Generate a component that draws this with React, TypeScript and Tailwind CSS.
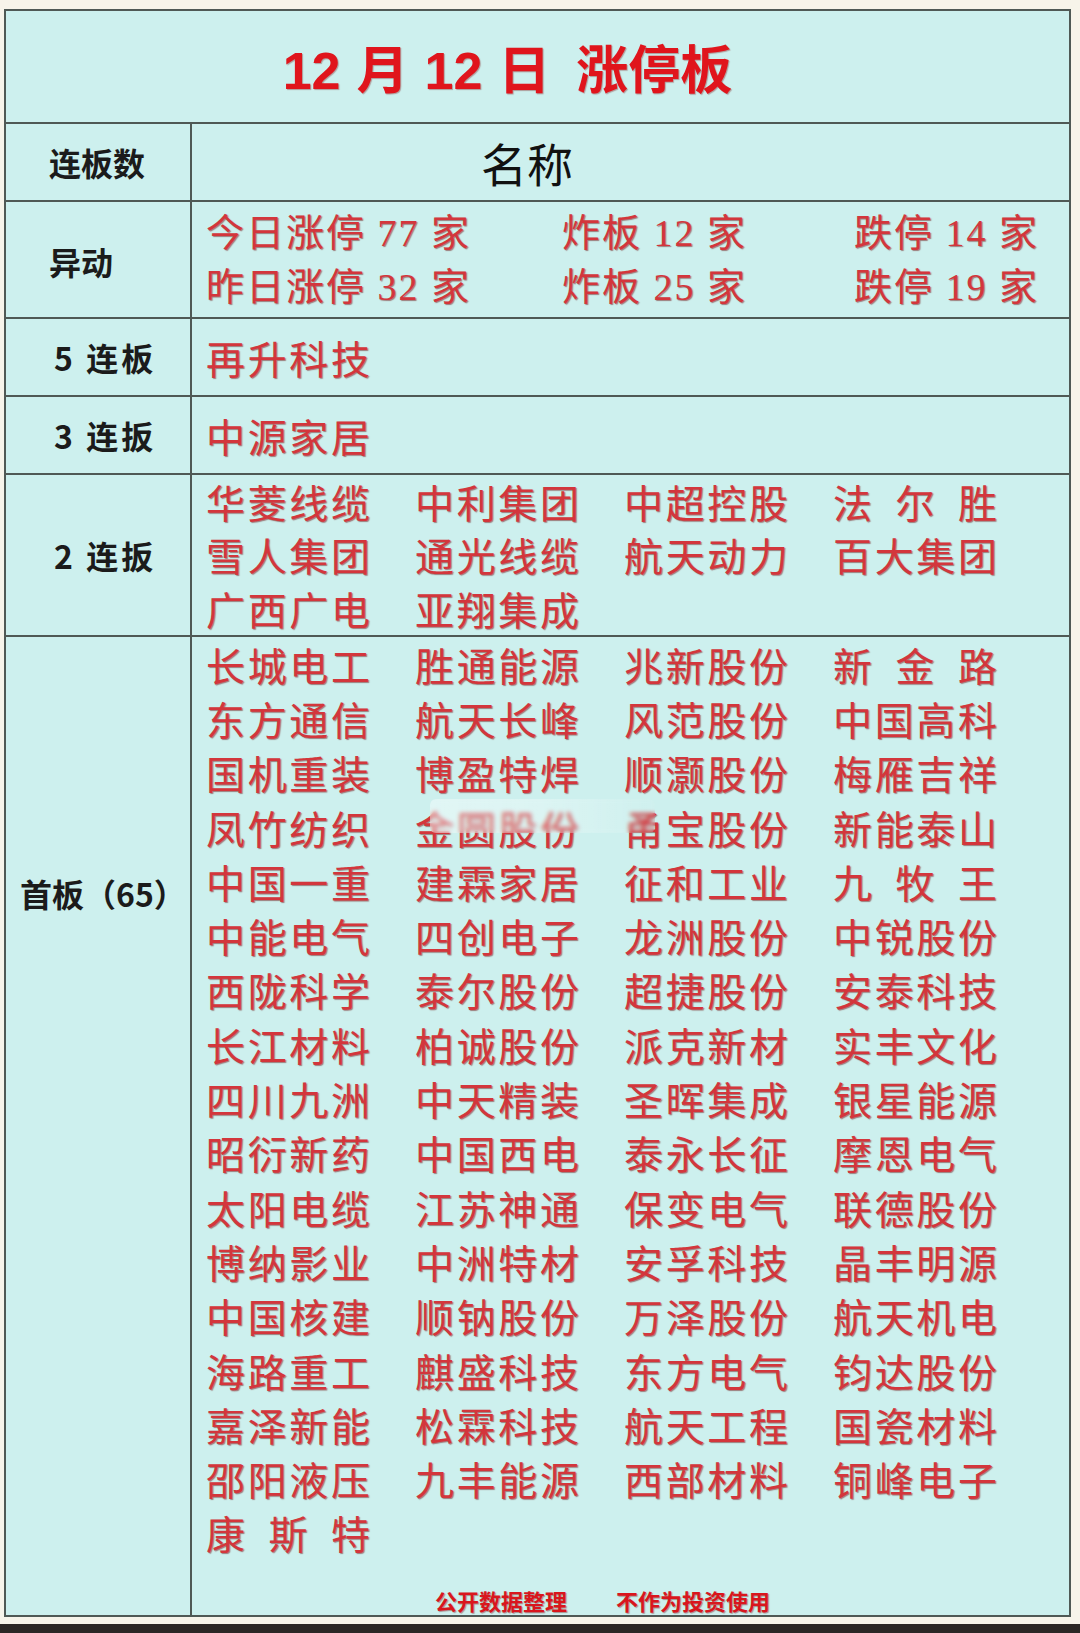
import React from "react";

const erLian: string[][] = [
  ["华菱线缆", "中利集团", "中超控股", "法尔胜"],
  ["雪人集团", "通光线缆", "航天动力", "百大集团"],
  ["广西广电", "亚翔集成"],
];

const shouBan: string[][] = [
  ["长城电工", "胜通能源", "兆新股份", "新金路"],
  ["东方通信", "航天长峰", "风范股份", "中国高科"],
  ["国机重装", "博盈特焊", "顺灏股份", "梅雁吉祥"],
  ["凤竹纺织", "金圆股份", "甬宝股份", "新能泰山"],
  ["中国一重", "建霖家居", "征和工业", "九牧王"],
  ["中能电气", "四创电子", "龙洲股份", "中锐股份"],
  ["西陇科学", "泰尔股份", "超捷股份", "安泰科技"],
  ["长江材料", "柏诚股份", "派克新材", "实丰文化"],
  ["四川九洲", "中天精装", "圣晖集成", "银星能源"],
  ["昭衍新药", "中国西电", "泰永长征", "摩恩电气"],
  ["太阳电缆", "江苏神通", "保变电气", "联德股份"],
  ["博纳影业", "中洲特材", "安孚科技", "晶丰明源"],
  ["中国核建", "顺钠股份", "万泽股份", "航天机电"],
  ["海路重工", "麒盛科技", "东方电气", "钧达股份"],
  ["嘉泽新能", "松霖科技", "航天工程", "国瓷材料"],
  ["邵阳液压", "九丰能源", "西部材料", "铜峰电子"],
  ["康斯特"],
];

function Name({ text }: { text: string }) {
  return (
    <div className="flex w-[164px] justify-between">
      {text.split("").map((c, i) => (
        <span key={i}>{c}</span>
      ))}
    </div>
  );
}

function NameRow({ names, h }: { names: string[]; h: string }) {
  return (
    <div className={`grid grid-cols-[164px_164px_164px_164px] gap-x-[45px] items-center ${h}`}>
      {names.map((n) => (
        <Name key={n} text={n} />
      ))}
    </div>
  );
}

const red =
  "text-[#d3363c] [text-shadow:1px_1px_1px_rgba(110,10,10,0.5)] text-[39px] leading-none font-normal";
const label = "text-[#1b1b1b] text-[32px] font-bold leading-none";

export default function App() {
  return (
    <div className="relative w-[1080px] h-[1633px] bg-[#f7f4ea] flex flex-col font-['Noto_Sans_CJK_SC',sans-serif]">
      <div className="ml-[4px] mt-[9px] w-[1067px] h-[1608px] border-2 border-[#4f5955] bg-[#cdf0ee] flex flex-col">
        {/* Title */}
        <div className="h-[113px] border-b-2 border-[#4f5955] flex items-center justify-center pr-[60px] pt-[8px]">
          <div className="text-[#e0151c] text-[52px] font-bold leading-none font-['Liberation_Sans','Noto_Sans_CJK_SC',sans-serif] [text-shadow:1px_1px_1px_rgba(120,0,0,0.35)] flex items-center">
            <span>12</span>
            <span className="ml-[16px]">月</span>
            <span className="ml-[16px]">12</span>
            <span className="ml-[16px]">日</span>
            <span className="ml-[26px]">涨停板</span>
          </div>
        </div>

        {/* Header */}
        <div className="h-[78px] border-b-2 border-[#4f5955] flex">
          <div className="w-[186px] border-r-2 border-[#4f5955] flex items-center pl-[43px]">
            <span className={label}>连板数</span>
          </div>
          <div className="flex-1 flex items-center pl-[289px]">
            <span className="text-[#111] text-[46px] leading-none">名称</span>
          </div>
        </div>

        {/* 异动 */}
        <div className="h-[117px] border-b-2 border-[#4f5955] flex">
          <div className="w-[186px] border-r-2 border-[#4f5955] flex items-center pl-[43px] pt-[2px]">
            <span className={label}>异动</span>
          </div>
          <div className="flex-1 flex flex-col justify-center pl-[14px] text-[#d3363c] [text-shadow:1px_1px_1px_rgba(110,10,10,0.5)] text-[38px] leading-none font-['Liberation_Serif','Noto_Sans_CJK_SC',serif] tracking-[2px]">
            <div className="grid grid-cols-[356px_292px_auto] h-[54px] items-center">
              <span>今日涨停 77 家</span>
              <span>炸板 12 家</span>
              <span>跌停 14 家</span>
            </div>
            <div className="grid grid-cols-[356px_292px_auto] h-[54px] items-center">
              <span>昨日涨停 32 家</span>
              <span>炸板 25 家</span>
              <span>跌停 19 家</span>
            </div>
          </div>
        </div>

        {/* 5连板 */}
        <div className="h-[78px] border-b-2 border-[#4f5955] flex">
          <div className="w-[186px] border-r-2 border-[#4f5955] flex items-center pl-[48px]">
            <span className={`${label} tracking-[3px]`}>5 连板</span>
          </div>
          <div className={`flex-1 flex items-center pl-[14px] ${red}`}>
            <Name text="再升科技" />
          </div>
        </div>

        {/* 3连扳 */}
        <div className="h-[78px] border-b-2 border-[#4f5955] flex">
          <div className="w-[186px] border-r-2 border-[#4f5955] flex items-center pl-[48px]">
            <span className={`${label} tracking-[3px]`}>3 连扳</span>
          </div>
          <div className={`flex-1 flex items-center pl-[14px] ${red}`}>
            <Name text="中源家居" />
          </div>
        </div>

        {/* 2连扳 */}
        <div className="h-[162px] border-b-2 border-[#4f5955] flex">
          <div className="w-[186px] border-r-2 border-[#4f5955] flex items-center pl-[48px]">
            <span className={`${label} tracking-[3px]`}>2 连扳</span>
          </div>
          <div className={`flex-1 flex flex-col justify-center pl-[14px] ${red}`}>
            {erLian.map((r, i) => (
              <NameRow key={i} names={r} h="h-[53.5px]" />
            ))}
          </div>
        </div>

        {/* 首板 */}
        <div className="flex-1 flex">
          <div className="w-[186px] border-r-2 border-[#4f5955] pl-[14px] pt-[240px]">
            <span className={label}>首板（65）</span>
          </div>
          <div className="flex-1 flex flex-col pl-[14px]">
            <div className={`flex flex-col ${red}`}>
              {shouBan.map((r, i) => (
                <NameRow key={i} names={r} h="h-[54.3px]" />
              ))}
            </div>
            <div className="mt-auto mb-[4px] flex items-center pl-[229px] text-[#d9161d] text-[22px] font-bold leading-none [text-shadow:1px_1px_1px_rgba(110,0,0,0.4)]">
              <span>公开数据整理</span>
              <span className="ml-[49px]">不作为投资使用</span>
            </div>
          </div>
        </div>
      </div>
      <div className="mt-auto h-[9px] bg-[#2b2725]" />

      {/* blurred watermark streak */}
      <div className="absolute left-[430px] top-[799px] w-[225px] h-[34px] backdrop-blur-[2px] bg-gradient-to-r from-white/40 via-white/30 to-white/5 rounded-[6px]" />
    </div>
  );
}
